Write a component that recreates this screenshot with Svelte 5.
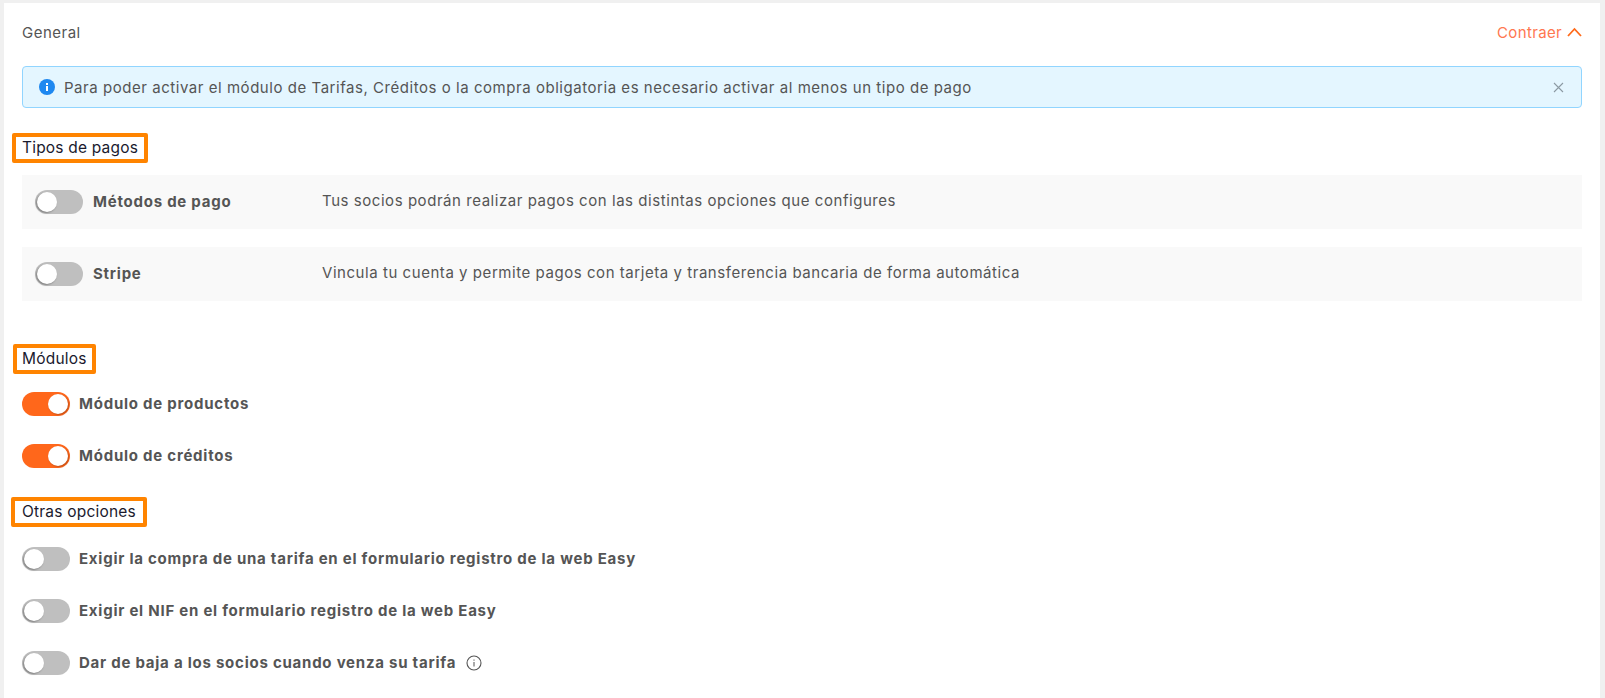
<script>
    const pagos = [
        { name: "Métodos de pago", desc: "Tus socios podrán realizar pagos con las distintas opciones que configures" },
        { name: "Stripe", desc: "Vincula tu cuenta y permite pagos con tarjeta y transferencia bancaria de forma automática" }
    ];
    const modulos = ["Módulo de productos", "Módulo de créditos"];
    const otras = [
        { name: "Exigir la compra de una tarifa en el formulario registro de la web Easy" },
        { name: "Exigir el NIF en el formulario registro de la web Easy" },
        { name: "Dar de baja a los socios cuando venza su tarifa", info: true }
    ];
</script>

<main class="card">
    <header class="top">
        <span class="general">General</span>
        <span class="collapse">
            Contraer
            <svg width="15" height="10" viewBox="0 0 15 10"><path d="M1 9 L7.5 2 L14 9" fill="none" stroke="#ff6a1a" stroke-width="1.8" /></svg>
        </span>
    </header>

    <div class="alert">
        <svg class="alert-icon" width="16" height="16" viewBox="0 0 16 16">
            <circle cx="8" cy="8" r="8" fill="#1e88f0" />
            <rect x="7" y="7" width="2" height="5" fill="#fff" />
            <rect x="7" y="4" width="2" height="2" fill="#fff" />
        </svg>
        <span class="alert-text">Para poder activar el módulo de Tarifas, Créditos o la compra obligatoria es necesario activar al menos un tipo de pago</span>
        <svg class="alert-close" width="11" height="11" viewBox="0 0 11 11"><path d="M1 1 L10 10 M10 1 L1 10" stroke="#8c9aa3" stroke-width="1.1" /></svg>
    </div>

    <h3 class="section first">Tipos de pagos</h3>
    <div class="pay-list">
        {#each pagos as p}
            <div class="pay-row">
                <span class="toggle"></span>
                <span class="label pay-label">{p.name}</span>
                <span class="desc">{p.desc}</span>
            </div>
        {/each}
    </div>

    <h3 class="section mods">Módulos</h3>
    <div class="opts mods-list">
        {#each modulos as m}
            <div class="opt">
                <span class="toggle on"></span>
                <span class="label">{m}</span>
            </div>
        {/each}
    </div>

    <h3 class="section others">Otras opciones</h3>
    <div class="opts">
        {#each otras as o}
            <div class="opt">
                <span class="toggle"></span>
                <span class="label">{o.name}</span>
                {#if o.info}
                    <svg class="info" width="16" height="16" viewBox="0 0 16 16">
                        <circle cx="8" cy="8" r="7" fill="none" stroke="#555" stroke-width="1.1" />
                        <rect x="7.5" y="7" width="1" height="4.5" fill="#555" />
                        <rect x="7.5" y="4.5" width="1" height="1.2" fill="#555" />
                    </svg>
                {/if}
            </div>
        {/each}
    </div>
</main>

<style>
    :global(body) {
        background: #f0f0f0;
        font-family: Inter, "Open Sans", sans-serif;
        overflow: hidden;
    }

    .card {
        background: #fff;
        margin: 3px 5px 0 4px;
        padding: 0 18px 0 18px;
        height: 695px;
        box-sizing: border-box;
        color: #555;
    }

    .top {
        display: flex;
        justify-content: space-between;
        align-items: center;
        height: 60px;
        font-size: 15px;
        padding-bottom: 2px;
        box-sizing: border-box;
    }

    .general {
        color: #555;
        letter-spacing: 0.5px;
    }

    .collapse {
        color: #ff7750;
        display: flex;
        align-items: center;
        gap: 5px;
        letter-spacing: 0.35px;
    }

    .alert {
        display: flex;
        align-items: center;
        height: 42px;
        box-sizing: border-box;
        margin-top: 3px;
        padding: 0 17px 0 16px;
        background: #e4f6ff;
        border: 1px solid #91d5ff;
        border-radius: 4px;
        font-size: 15px;
        letter-spacing: 0.54px;
    }

    .alert-text {
        margin-left: 9px;
        flex: 1;
        color: #555;
    }

    .section {
        display: block;
        width: fit-content;
        box-sizing: border-box;
        margin: 0;
        font-size: 15.5px;
        font-weight: 400;
        letter-spacing: 0.2px;
        color: #1a1a2e;
        border: 4px solid #ff8400;
        border-radius: 2px;
        height: 30px;
        line-height: 21px;
        padding: 0 6px;
        margin-left: -10px;
    }

    .first {
        margin-top: 25px;
    }

    .mods {
        margin-top: 43px;
        margin-left: -9px;
        padding: 0 5px;
    }

    .others {
        margin-top: 29px;
        margin-left: -11px;
        padding: 0 7px;
    }

    .pay-list {
        margin-top: 12px;
        display: flex;
        flex-direction: column;
        gap: 18px;
    }

    .pay-row {
        display: flex;
        align-items: center;
        height: 54px;
        padding-left: 13px;
        background: #f9f9f9;
    }

    .pay-label {
        margin-left: 10px;
        width: 229px;
        flex: none;
    }

    .desc {
        font-size: 15px;
        letter-spacing: 0.55px;
        color: #555;
        margin-top: -3px;
    }

    .label {
        font-size: 15px;
        font-weight: 700;
        color: #555;
        letter-spacing: 0.76px;
        margin-top: -1px;
    }

    .opts {
        margin-top: 20px;
        display: flex;
        flex-direction: column;
        gap: 28px;
    }

    .opts.mods-list {
        margin-top: 18px;
    }

    .opt {
        display: flex;
        align-items: center;
        height: 24px;
        gap: 9px;
    }

    .info {
        margin-left: 1px;
    }

    .toggle {
        position: relative;
        flex: none;
        display: block;
        width: 48px;
        height: 24px;
        box-sizing: border-box;
        border-radius: 12px;
        background: #bfbfbf;
    }

    .toggle::after {
        content: "";
        position: absolute;
        left: 2px;
        top: 2px;
        width: 20px;
        height: 20px;
        border-radius: 50%;
        background: #fff;
        box-shadow: -1px 1px 2px rgba(0, 0, 0, 0.35);
    }

    .toggle.on {
        background: #ff671b;
    }

    .toggle.on::after {
        left: 26px;
        box-shadow: 1px 1px 2px rgba(0, 0, 0, 0.25);
    }
</style>
